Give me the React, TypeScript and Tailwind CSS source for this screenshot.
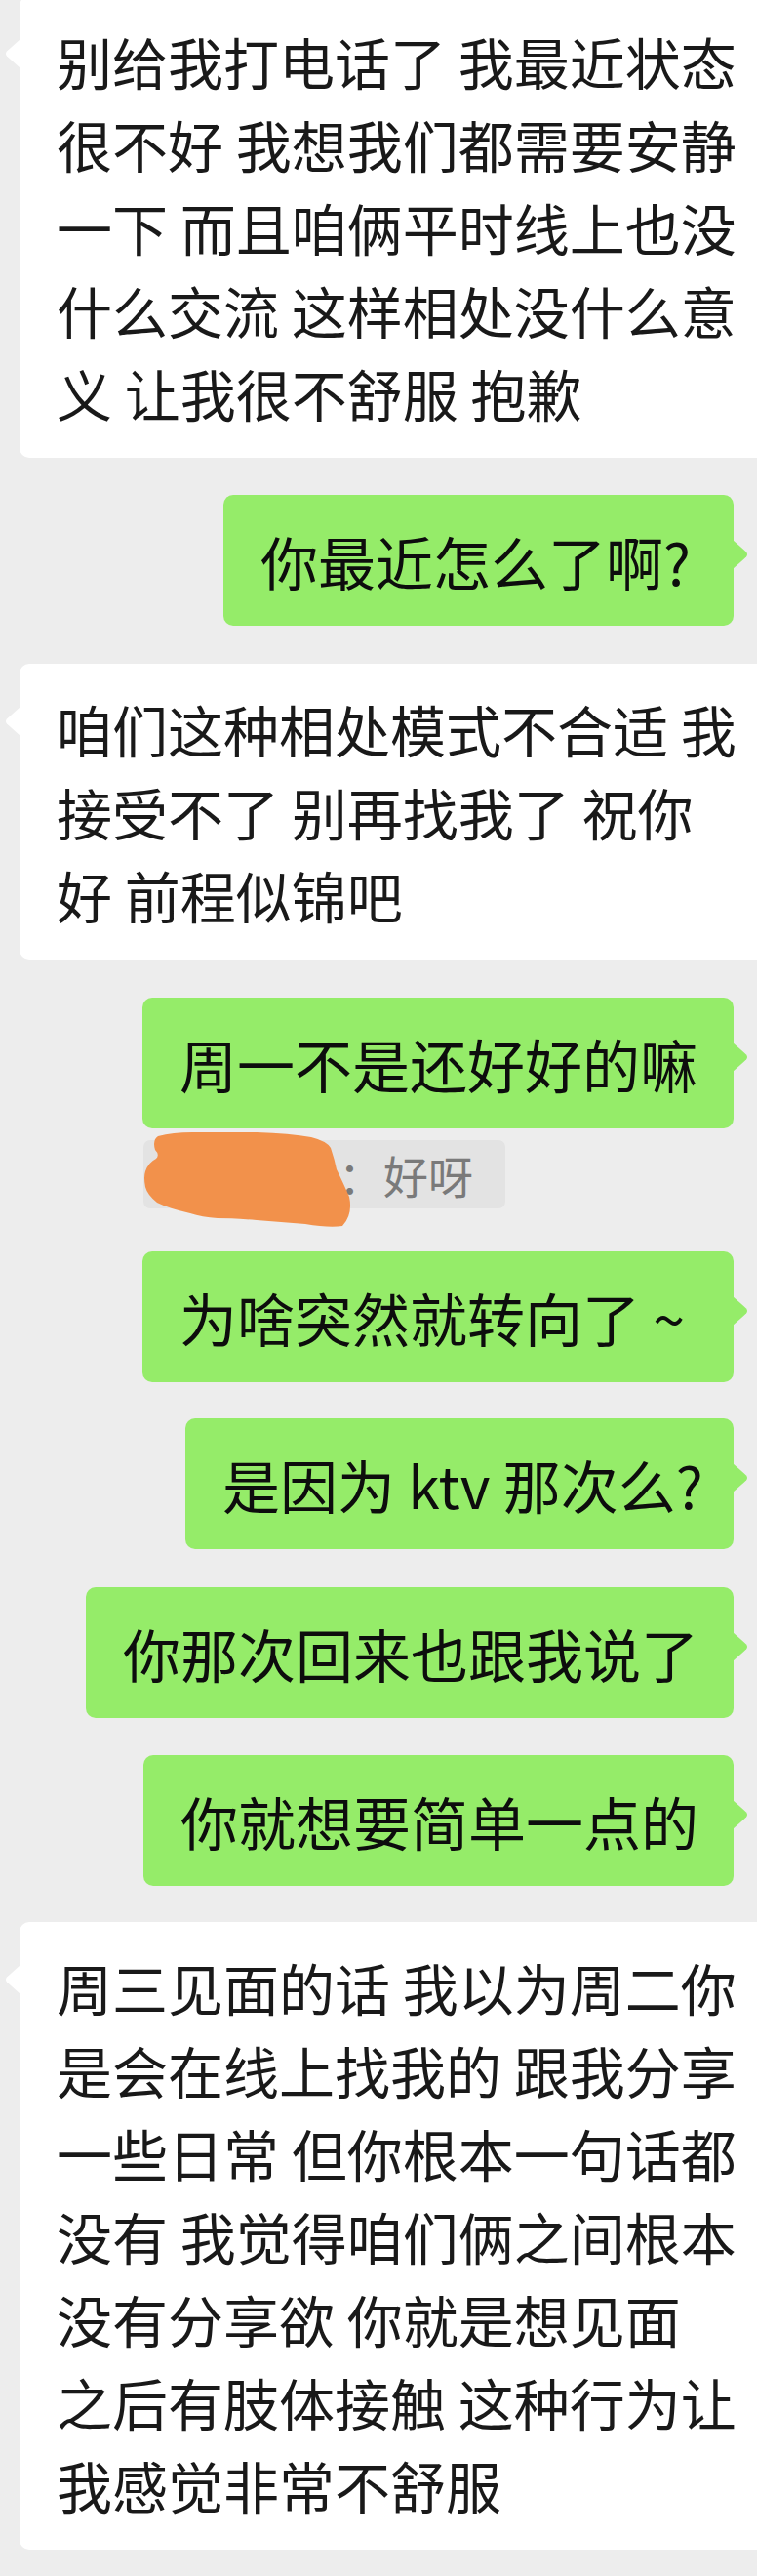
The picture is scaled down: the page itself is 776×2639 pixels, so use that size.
import React from "react";

// white incoming bubble, runs off the right edge of the screen
function LeftBubble({ lines, className }: { lines: string[]; className: string }) {
  return (
    <div className={"relative ml-[20px] rounded-l-[10px] bg-white pl-[38px] pt-[24px] pb-[24px] " + className}>
      <svg className="absolute left-[-16px] top-[44px] h-[30px] w-[17px]" viewBox="0 0 17 30">
        <path d="M17 0 L3 12.5 Q1 15 3 17.5 L17 30 Z" fill="#ffffff" />
      </svg>
      {lines.map((l) => (
        <div key={l} className="whitespace-nowrap">
          {l}
        </div>
      ))}
    </div>
  );
}

function RightBubble({ text, className }: { text: string; className: string }) {
  return (
    <div
      className={
        "relative mr-[24px] self-end whitespace-nowrap rounded-[10px] bg-[#95ec69] pl-[38px] pt-[25px] pb-[24px] text-[59px] text-[#0d0d0d] " +
        className
      }>
      {text}
      <svg className="absolute right-[-16px] top-[46px] h-[30px] w-[17px]" viewBox="0 0 17 30">
        <path d="M0 0 L14 12.5 Q16 15 14 17.5 L0 30 Z" fill="#95ec69" />
      </svg>
    </div>
  );
}

function Quote() {
  return (
    <div className="relative mt-[12px] ml-[147px] flex h-[70px] w-[371px] items-center self-start rounded-[7px] bg-[#e3e3e3] pl-[16px] text-[46px] leading-[70px] text-[#7a7a7a]">
      <span className="w-[184px]" />
      <span>：好呀</span>
      {/* name scribbled out */}
      <svg className="absolute left-0 top-[-10px] h-[100px] w-[216px]" viewBox="0 0 216 100">
        <path
          d="M15 6 Q30 2 50 2 L116 2 Q150 3 172 7 Q188 11 192 18 Q196 30 198 40 Q204 52 211 68 Q215 86 204 98 Q190 100 166 96 L116 92 Q90 90 76 90 Q60 89 48 85 Q26 80 14 74 Q4 66 2 58 Q0 48 2 42 Q5 33 13 29 Q17 25 12 20 Q9 10 15 6 Z"
          fill="#f2914b"
        />
      </svg>
    </div>
  );
}

export default function App() {
  return (
    <div className="flex h-[2639px] w-[776px] flex-col overflow-hidden bg-[#ededed] font-['Noto_Sans_CJK_SC','Noto_Sans',sans-serif] text-[57px] leading-[85px] text-[#191919]">
      <LeftBubble
        className="mt-[-4px]"
        lines={[
          "别给我打电话了 我最近状态",
          "很不好 我想我们都需要安静",
          "一下 而且咱俩平时线上也没",
          "什么交流 这样相处没什么意",
          "义 让我很不舒服 抱歉",
        ]}
      />
      <RightBubble className="mt-[38px] w-[523px]" text="你最近怎么了啊?" />
      <LeftBubble
        className="mt-[39px]"
        lines={["咱们这种相处模式不合适 我", "接受不了 别再找我了 祝你", "好 前程似锦吧"]}
      />
      <RightBubble className="mt-[39px] w-[606px]" text="周一不是还好好的嘛" />
      <Quote />
      <RightBubble className="mt-[44px] w-[606px]" text="为啥突然就转向了 ~" />
      <RightBubble className="mt-[37px] w-[562px]" text="是因为 ktv 那次么?" />
      <RightBubble className="mt-[39px] w-[664px]" text="你那次回来也跟我说了" />
      <RightBubble className="mt-[38px] w-[605px]" text="你就想要简单一点的" />
      <LeftBubble
        className="mt-[37px]"
        lines={[
          "周三见面的话 我以为周二你",
          "是会在线上找我的 跟我分享",
          "一些日常 但你根本一句话都",
          "没有 我觉得咱们俩之间根本",
          "没有分享欲 你就是想见面",
          "之后有肢体接触 这种行为让",
          "我感觉非常不舒服",
        ]}
      />
    </div>
  );
}
